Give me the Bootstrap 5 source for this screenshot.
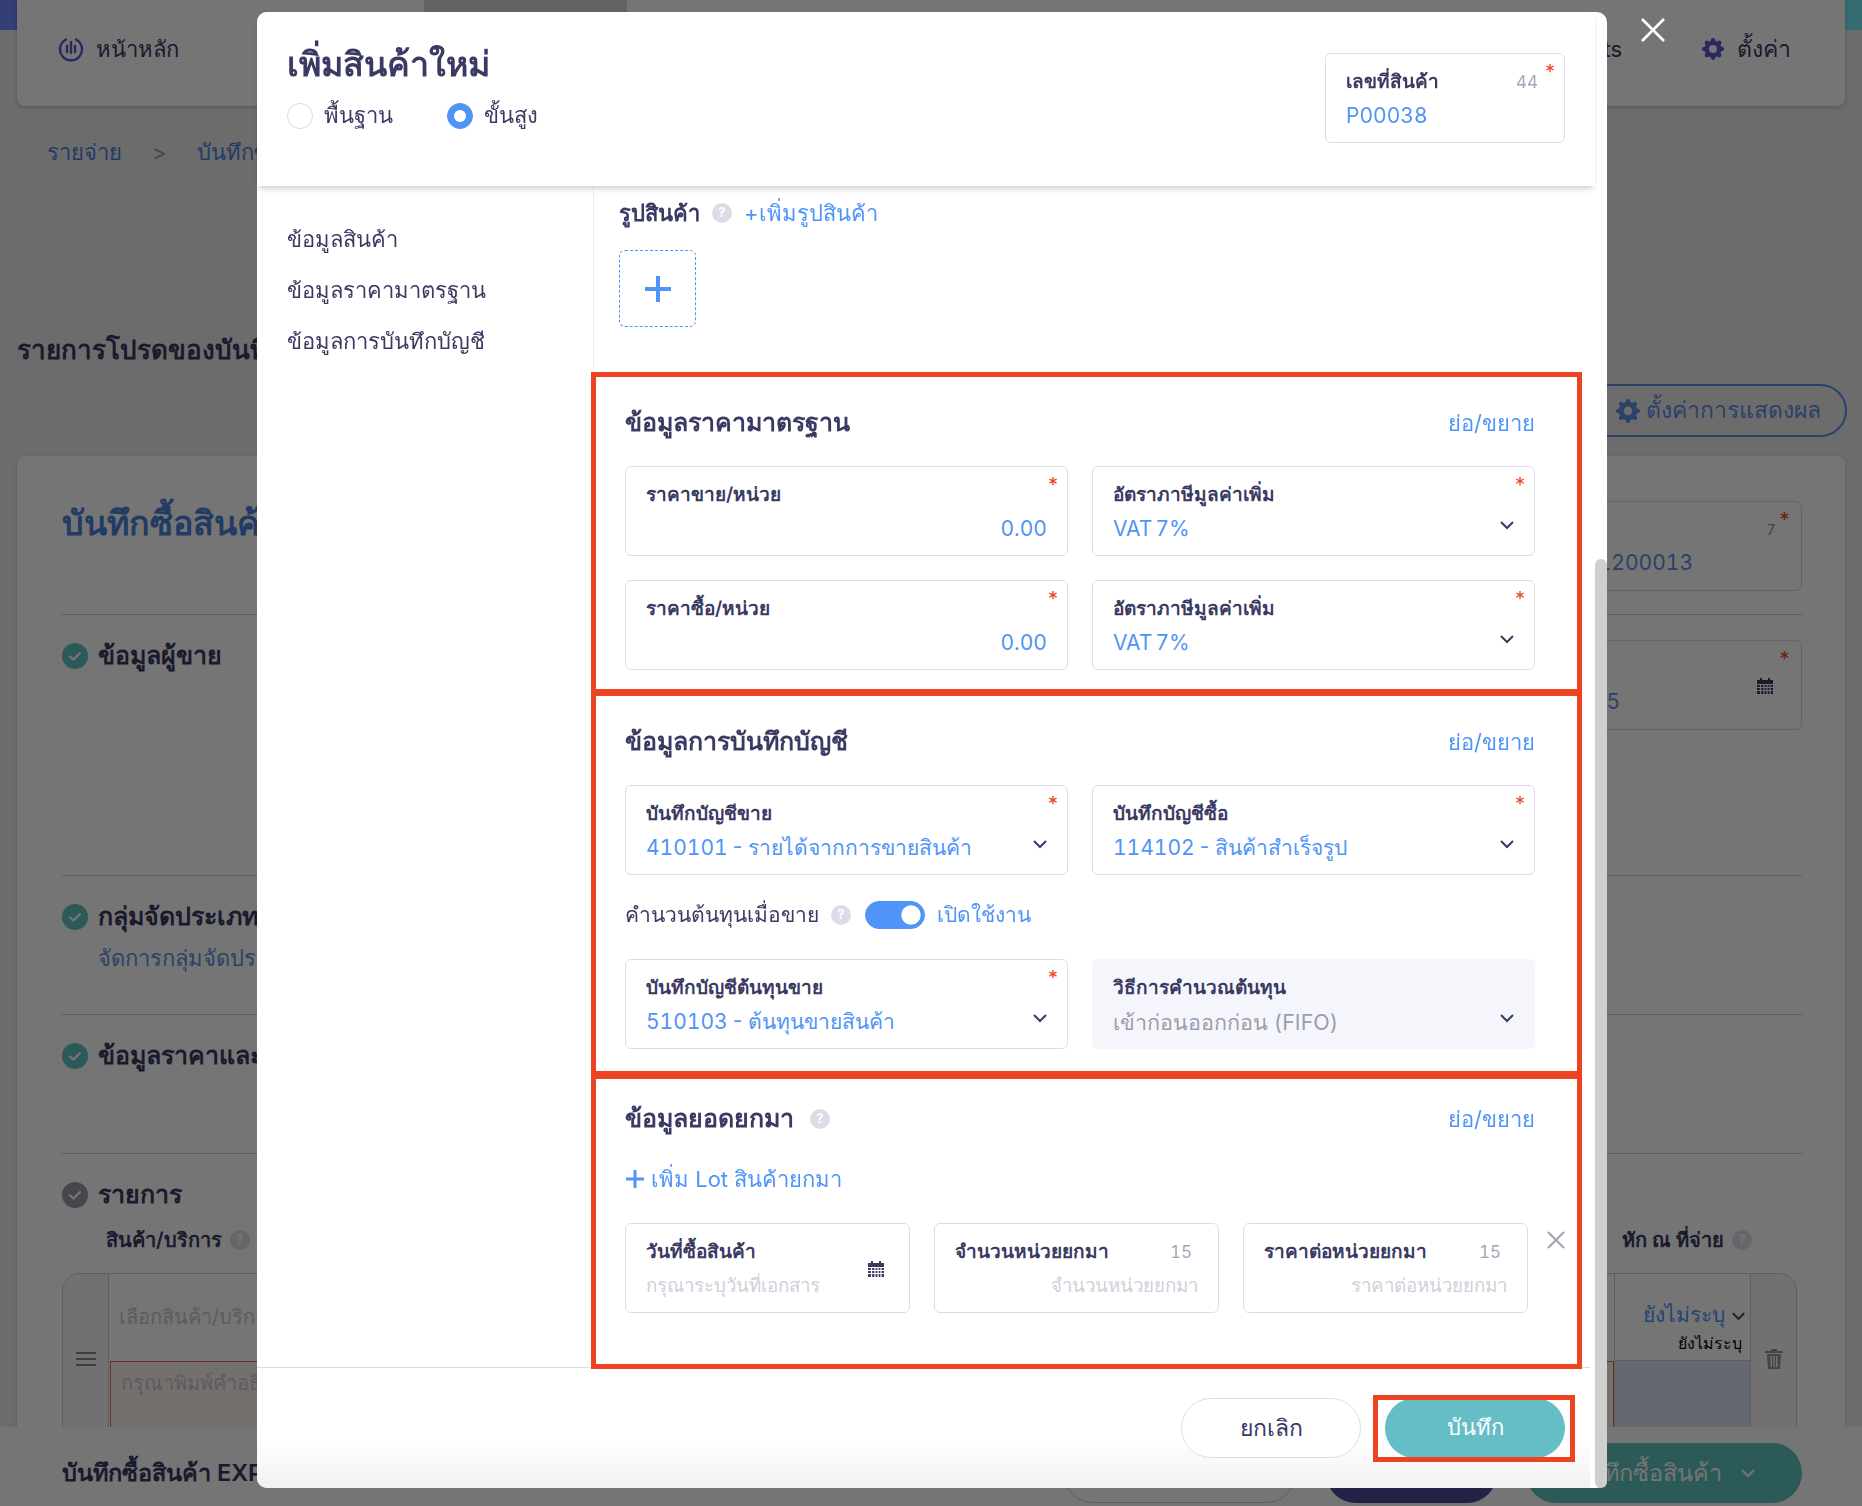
<!DOCTYPE html>
<html lang="th">
<head>
    <meta charset="UTF-8">
    <title>เพิ่มสินค้าใหม่</title>
    <link href="https://cdn.jsdelivr.net/npm/bootstrap@5.3.3/dist/css/bootstrap.min.css" rel="stylesheet">
    <script src="https://cdn.jsdelivr.net/npm/bootstrap@5.3.3/dist/js/bootstrap.bundle.min.js"></script>
    <style>
        html, body { height: 100%; overflow: hidden; }
        body { font-family: Inter, "Noto Sans", sans-serif; background: #ebebee; color: #3a3a63; font-size: 21px; }
        .txt-blue { color: #4f94f7; }
        .txt-navy { color: #3a3a63; }
        /* page behind the modal */
        .pg-top { background: linear-gradient(90deg, #7189ff, #71ecf7) top / 100% 30px no-repeat; padding: 0 17px; }
        .pg-nav { height: 106px; background: #fff; border-radius: 0 0 8px 8px; box-shadow: 0 1px 4px rgba(0,0,0,.2); font-size: 22px; }
        .pg-home { width: 407px; padding-left: 41px; padding-bottom: 8px; gap: 12px; }
        .pg-tab { width: 203px; background: #d8d8d8; align-self: stretch; }
        .pg-navright { padding-bottom: 8px; }
        .pg-navgear { margin: 0 13px 0 80px; color: #5b5bd0; }
        .pg-navset { margin-right: 54px; font-size: 23px; }
        .pg-crumb { padding: 30px 0 0 47px; height: 82px; color: #4a80d8; gap: 30px; font-size: 22px; }
        .pg-crumb-sep { color: #999; }
        .pg-head { padding: 0 15px 0 17px; height: 268px; }
        .pg-fav { font-size: 26px; font-weight: 600; padding-top: 142px; }
        .pg-setbtn { width: 292px; height: 53px; margin-top: 196px; padding-right: 24px; gap: 6px; border: 2px solid #5f8fe0; border-radius: 27px; color: #5f8fe0; background: transparent; font-size: 23px; }
        .pg-card { margin: 0 17px; background: #fff; border-radius: 8px; padding: 0 43px 0 45px; height: 1100px; box-shadow: 0 1px 4px rgba(0,0,0,.12); }
        .pg-title-row { height: 158px; }
        .pg-title { font-size: 34px; font-weight: 600; color: #4a80d8; margin: 47px 0 0; }
        .pg-sec { border-top: 1px solid #ccc; height: 261px; padding-top: 22px; }
        .pg-sec-sm { height: 139px; }
        .pg-sec-h { font-size: 25px; font-weight: 600; gap: 10px; }
        .pg-check { width: 26px; height: 26px; border-radius: 50%; background: #5ec4bf; flex: none; }
        .pg-check-g { background: #9a9aa6; }
        .pg-link { color: #5f8fe0; font-size: 22px; margin: 6px 0 0 36px; }
        .pg-fld { width: 400px; height: 90px; border: 1px solid #d8d8e2; border-radius: 6px; position: relative; padding: 45px 0 0; color: #5f8fe0; text-align: right; font-feature-settings: "tnum"; }
        .pg-fld-a { margin-top: 45px; padding-right: 108px; }
        .pg-fld-b { margin-top: 3px; padding-right: 181px; }
        .pg-fld-max { position: absolute; top: 17px; right: 25px; font-size: 15px; color: #999; }
        .pg-fld-star { position: absolute; top: 8px; right: 10px; color: #ee4323; font-size: 20px; line-height: 20px; }
        .pg-fld-cal { position: absolute; top: 36px; right: 27px; line-height: 0; }
        .pg-tbl-h { font-size: 20px; font-weight: 600; height: 59px; padding: 11px 50px 0 44px; }
        .pg-tbl { height: 300px; margin-right: 5px; border: 1px solid #ccc; border-radius: 18px 18px 0 0; }
        .pg-tbl-side { width: 46px; background: #f6f6f6; border-right: 1px solid #ccc; border-radius: 18px 0 0 0; padding-top: 77px; line-height: 0; text-align: center; }
        .pg-tbl-main { flex: 1; }
        .pg-ph { color: #c8c8d2; font-size: 20px; padding: 28px 10px 0; height: 87px; }
        .pg-redbox { margin-left: 1px; border: 1px solid #e26a4f; background: #fdf3ef; height: 200px; color: #c8c8d2; font-size: 20px; padding: 6px 10px; }
        .pg-tbl-vat { width: 136px; border-left: 1px solid #ccc; text-align: right; }
        .pg-tbl-vat-top { height: 87px; border-bottom: 1px solid #ccc; padding: 26px 4px 0 0; font-size: 21px; line-height: 30px; }
        .pg-tbl-vat-top small { display: block; font-size: 16px; color: #000; line-height: 20px; padding: 3px 4px 0 0; }
        .pg-tbl-vat-low { height: 200px; background: #dbe4f3; }
        .pg-tbl-tr { width: 46px; background: #f6f6f6; border-left: 1px solid #ccc; border-radius: 0 18px 0 0; padding-top: 75px; text-align: center; line-height: 0; }
        .pg-bottom { position: absolute; left: 0; right: 0; bottom: 0; height: 79px; background: #fff; padding: 14px 60px 1px 62px; font-size: 23.5px; font-weight: 600; }
        .pg-btn { height: 60px; border-radius: 30px; }
        .pg-btn-o { width: 233px; border: 1px solid #ccc; margin-left: auto; }
        .pg-btn-n { width: 171px; background: #4a4a9c; margin-left: 30px; }
        .pg-btn-t { width: 276px; background: #5ec4bf; margin-left: 29px; color: #fff; font-weight: 400; gap: 18px; }
        /* modal */
        .modal-backdrop { --bs-backdrop-opacity: .54; }
        .prod-dialog { max-width: none; width: 1350px; margin: 12px 0 0 257px; }
        .prod-content { height: 1476px; border: 0; border-radius: 10px; }
        .prod-close { position: absolute; left: 1383px; top: 5px; background: none; border: 0; padding: 0; line-height: 0; }
        .modal-header.prod-header { height: 174px; margin-right: 12px; padding: 0 30px; border: 0; border-radius: 10px 0 0 0; box-shadow: 0 4px 6px -2px rgba(0,0,0,.22); align-items: flex-start; position: relative; z-index: 2; background: #fff; }
        .prod-title { font-size: 34px; font-weight: 600; margin: 29px 0 0; line-height: 46px; }
        .prod-radio { gap: 54px; margin-top: 12px; }
        .prod-radio .form-check { padding: 0; margin: 0; display: flex; align-items: center; gap: 11px; }
        .prod-radio .form-check-input { float: none; width: 26px; height: 26px; margin: 0; border-color: #dcdce8; }
        .prod-radio .form-check-input:checked { background-color: #4f94f7; border-color: #4f94f7; }
        .prod-radio .form-check-label { font-size: 22px; }
        .prod-code { width: 240px; height: 90px; margin-top: 41px; }
        .modal-body.prod-body { padding: 0; display: flex; position: relative; z-index: 1; min-height: 0; }
        .prod-side { width: 337px; flex: none; padding: 30px 0 0 30px; border-right: 1px solid #eeeef4; height: 186px; font-size: 22px; font-weight: 300; }
        .prod-side div { height: 51px; line-height: 46px; }
        .prod-pane { flex: 1; margin: 0 25px 0 -3px; min-width: 0; }
        .prod-pic { padding: 8px 0 0 28px; height: 186px; }
        .prod-pic-h { font-size: 22px; gap: 12px; height: 38px; }
        .prod-pic-h b { font-weight: 600; }
        .prod-add { width: 77px; height: 77px; border: 1px dashed #4f94f7; border-radius: 6px; margin-top: 18px; }
        .prod-q { display: inline-flex; align-items: center; justify-content: center; width: 20px; height: 20px; border-radius: 50%; background: #dcdce8; color: #fff; font-size: 13px; font-weight: 700; flex: none; }
        .prod-frame { border: 5px solid #ee4323; padding: 0 42px 0 29px; }
        .prod-frame-a { height: 322px; }
        .prod-frame-b { height: 385px; margin-top: -3px; }
        .prod-frame-c { height: 295px; margin-top: -2px; }
        .prod-sec-h { height: 89px; padding-top: 3px; }
        .prod-frame-c .prod-sec-h { height: 80px; padding-top: 0; }
        .prod-sec-t { font-size: 25px; font-weight: 600; }
        .prod-fold { font-size: 22px; color: #4f94f7; }
        .prod-fld { position: relative; height: 90px; border: 1px solid #dcdce8; border-radius: 6px; padding: 14px 20px 0; background: #fff; }
        .prod-fld-off { background: #f5f6fb; border-color: #f5f6fb; }
        .prod-lbl { font-size: 19px; font-weight: 600; line-height: 28px; }
        .prod-max { font-size: 17px; color: #a6a6b8; font-weight: 400; padding-right: 2px; font-feature-settings: "tnum"; }
        .prod-val { font-size: 21px; color: #4f94f7; line-height: 32px; margin-top: 4px; font-feature-settings: "tnum"; word-spacing: -2.5px; }
        .prod-val-off { color: #9c9cae; font-size: 21.5px; word-spacing: 0; }
        .prod-val-ph { font-size: 18.7px; color: #cfcfda; font-weight: 300; word-spacing: 0; }
        .prod-star { position: absolute; top: 8px; right: 9px; color: #ee4323; font-size: 20px; line-height: 20px; }
        .prod-chev { position: absolute; right: 19px; top: 53px; line-height: 0; }
        .prod-cal { position: absolute; right: 24px; top: 36px; line-height: 0; }
        .prod-toggle { height: 84px; padding-bottom: 4px; gap: 12px; }
        .prod-toggle .form-switch { padding: 0; margin: 0 0 0 2px; min-height: 0; display: flex; }
        .prod-toggle .form-check-input { float: none; width: 60px; height: 28px; margin: 0; background-color: #4f94f7; border-color: #4f94f7; }
        .prod-lot { height: 40px; font-size: 22px; gap: 6px; }
        .prod-lot-row { gap: 24px; margin-top: 24px; }
        .prod-lot-row .prod-fld { flex: 1; }
        .prod-x { line-height: 0; margin: 7px -31px 0 -6px; }
        .prod-thumb { position: absolute; right: 0; top: 547px; width: 12px; height: 929px; background: #cfcfcf; border-radius: 6px; z-index: 3; }
        .modal-footer.prod-footer { height: 121px; padding: 0 24px 0 0; margin-right: 17px; border-top: 1px solid #dcdce8; background: linear-gradient(#fff 60%, #f1f1f1); border-radius: 0 0 0 10px; flex-wrap: nowrap; gap: 12px; }
        .prod-cancel { width: 180px; height: 60px; border: 1px solid #dcdce8; border-radius: 30px; background: #fff; color: #3a3a63; font-size: 23px; margin: 0; }
        .prod-save-box { border: 5px solid #ee4323; width: 202px; height: 67px; overflow: hidden; margin: 0 -9px 0 0; flex: none; padding: 0 0 0 7px; }
        .prod-save { width: 180px; height: 60px; margin-top: -2px; border-radius: 30px; border: 0; background: #65bec6; color: #fff; font-size: 22px; }
    </style>
</head>
<body>
    <svg width="0" height="0" class="position-absolute">
        <symbol id="icoGear" viewBox="0 0 16 16"><path fill="currentColor" d="M9.405 1.05c-.413-1.4-2.397-1.4-2.81 0l-.1.34a1.464 1.464 0 0 1-2.105.872l-.31-.17c-1.283-.698-2.686.705-1.987 1.987l.169.311c.446.82.023 1.841-.872 2.105l-.34.1c-1.4.413-1.4 2.397 0 2.81l.34.1a1.464 1.464 0 0 1 .872 2.105l-.17.31c-.698 1.283.705 2.686 1.987 1.987l.311-.169a1.464 1.464 0 0 1 2.105.872l.1.34c.413 1.4 2.397 1.4 2.81 0l.1-.34a1.464 1.464 0 0 1 2.105-.872l.31.17c1.283.698 2.686-.705 1.987-1.987l-.169-.311a1.464 1.464 0 0 1 .872-2.105l.34-.1c1.4-.413 1.4-2.397 0-2.81l-.34-.1a1.464 1.464 0 0 1-.872-2.105l.17-.31c.698-1.283-.705-2.686-1.987-1.987l-.311.169a1.464 1.464 0 0 1-2.105-.872l-.1-.34zM8 10.93a2.929 2.929 0 1 1 0-5.86 2.929 2.929 0 0 1 0 5.858z"/></symbol>
        <symbol id="icoChev" viewBox="0 0 16 10"><path d="M2 2l6 6 6-6" fill="none" stroke="currentColor" stroke-width="2"/></symbol>
        <symbol id="icoCal" viewBox="0 0 18 18"><path fill="#3a3a63" d="M1 3h16v4H1zM4 1h2v3H4zM12 1h2v3h-2z"/><path fill="#3a3a63" d="M1 8h16v9H1z"/><path stroke="#fff" stroke-width="1.2" d="M1 10.5h16M1 13.5h16M4.500 8v9M8 8v9M11 8v9M14 8v9"/></symbol>
        <symbol id="icoCheck" viewBox="0 0 26 26"><path d="M8 13.500l3.500 3 6.500-6.500" fill="none" stroke="#fff" stroke-width="2.200" stroke-linecap="round" stroke-linejoin="round"/></symbol>
    </svg>

    <!-- page behind the modal -->
    <div class="pg-top">
        <div class="pg-nav d-flex align-items-center">
            <div class="pg-home d-flex align-items-center">
                <svg width="26" height="26" viewBox="0 0 26 26" fill="none" stroke="#5b5bd0" stroke-width="2.4" stroke-linecap="round"><path d="M8 3.500a11 11 0 1 0 10 0"/><path d="M9 10v6M13 6v11M17 10v6"/></svg>
                <span>หน้าหลัก</span>
            </div>
            <div class="pg-tab"></div>
            <div class="ms-auto pg-navright">Contacts</div>
            <div class="d-flex align-items-center pg-navright pg-navset">
                <svg width="22" height="26" class="pg-navgear"><use href="#icoGear"/></svg>
                <span>ตั้งค่า</span>
            </div>
        </div>
    </div>
    <div class="pg-crumb d-flex"><span>รายจ่าย</span><span class="pg-crumb-sep">&gt;</span><span>บันทึกซื้อสินค้า</span></div>
    <div class="pg-head d-flex justify-content-between align-items-start">
        <div class="pg-fav">รายการโปรดของบันทึกซื้อสินค้า</div>
        <button class="pg-setbtn btn d-flex align-items-center justify-content-end ps-0">
            <svg width="24" height="24"><use href="#icoGear"/></svg>ตั้งค่าการแสดงผล
        </button>
    </div>
    <div class="pg-card">
        <div class="pg-title-row d-flex justify-content-between align-items-start">
            <h2 class="pg-title">บันทึกซื้อสินค้า</h2>
            <div class="pg-fld pg-fld-a">EXP201200013<span class="pg-fld-max">7</span><span class="pg-fld-star">*</span></div>
        </div>
        <div class="pg-sec d-flex justify-content-between align-items-start">
            <div class="pg-sec-h d-flex align-items-center"><svg class="pg-check"><use href="#icoCheck"/></svg>ข้อมูลผู้ขาย</div>
            <div class="pg-fld pg-fld-b">25/01/2565<span class="pg-fld-cal"><svg width="18" height="18"><use href="#icoCal"/></svg></span><span class="pg-fld-star">*</span></div>
        </div>
        <div class="pg-sec pg-sec-sm">
            <div class="pg-sec-h d-flex align-items-center"><svg class="pg-check"><use href="#icoCheck"/></svg>กลุ่มจัดประเภท</div>
            <div class="pg-link">จัดการกลุ่มจัดประเภท</div>
        </div>
        <div class="pg-sec pg-sec-sm">
            <div class="pg-sec-h d-flex align-items-center"><svg class="pg-check"><use href="#icoCheck"/></svg>ข้อมูลราคาและภาษี</div>
        </div>
        <div class="pg-sec pg-sec-sm">
            <div class="pg-sec-h d-flex align-items-center"><svg class="pg-check pg-check-g"><use href="#icoCheck"/></svg>รายการ</div>
            <div class="pg-tbl-h d-flex justify-content-between">
                <span class="d-flex align-items-center gap-2 align-self-start">สินค้า/บริการ <span class="prod-q">?</span></span>
                <span class="d-flex align-items-center gap-2 align-self-start">หัก ณ ที่จ่าย <span class="prod-q">?</span></span>
            </div>
            <div class="pg-tbl d-flex">
                <div class="pg-tbl-side">
                    <svg width="20" height="16" viewBox="0 0 20 16" stroke="#888" stroke-width="2"><path d="M0 2h20M0 8h20M0 14h20"/></svg>
                </div>
                <div class="pg-tbl-main">
                    <div class="pg-ph">เลือกสินค้า/บริการ</div>
                    <div class="pg-redbox">กรุณาพิมพ์คำอธิบาย</div>
                </div>
                <div class="pg-tbl-vat">
                    <div class="pg-tbl-vat-top txt-blue">ยังไม่ระบุ <svg width="15" height="10" class="txt-navy"><use href="#icoChev"/></svg><small>ยังไม่ระบุ</small></div>
                    <div class="pg-tbl-vat-low"></div>
                </div>
                <div class="pg-tbl-tr">
                    <svg width="18" height="20" viewBox="0 0 18 20" fill="#999"><path d="M0 2h18v2H0zM6 0h6v2H6zM2 5h14l-1 15H3zM5.500 7v11h1.500V7zM8.300 7v11h1.500V7zM11 7v11h1.500V7z" fill-rule="evenodd"/></svg>
                </div>
            </div>
        </div>
    </div>
    <div class="pg-bottom d-flex align-items-center">
        <span>บันทึกซื้อสินค้า EXP201200013</span>
        <div class="pg-btn pg-btn-o"></div>
        <div class="pg-btn pg-btn-n"></div>
        <div class="pg-btn pg-btn-t d-flex align-items-center justify-content-center">บันทึกซื้อสินค้า <svg width="16" height="10"><use href="#icoChev"/></svg></div>
    </div>

    <div class="modal-backdrop show"></div>

    <!-- add product modal -->
    <div class="modal d-block">
        <div class="modal-dialog prod-dialog position-relative">
            <button class="prod-close" type="button">
                <svg width="26" height="26" viewBox="0 0 26 26" stroke="#fff" stroke-width="2.6"><path d="M2 2l22 22M24 2L2 24"/></svg>
            </button>
            <div class="modal-content prod-content position-relative">
                <div class="prod-thumb"></div>
                <div class="modal-header prod-header justify-content-between">
                    <div>
                        <h1 class="prod-title">เพิ่มสินค้าใหม่</h1>
                        <div class="prod-radio d-flex">
                            <div class="form-check">
                                <input class="form-check-input" type="radio" name="mode" id="modeBasic">
                                <label class="form-check-label" for="modeBasic">พื้นฐาน</label>
                            </div>
                            <div class="form-check">
                                <input class="form-check-input" type="radio" name="mode" id="modeAdv" checked>
                                <label class="form-check-label" for="modeAdv">ขั้นสูง</label>
                            </div>
                        </div>
                    </div>
                    <div class="prod-fld prod-code">
                        <div class="prod-lbl d-flex justify-content-between pe-1">เลขที่สินค้า <span class="prod-max">44</span></div>
                        <div class="prod-val">P00038</div>
                        <span class="prod-star">*</span>
                    </div>
                </div>

                <div class="modal-body prod-body">
                    <div class="prod-side">
                        <div>ข้อมูลสินค้า</div>
                        <div>ข้อมูลราคามาตรฐาน</div>
                        <div>ข้อมูลการบันทึกบัญชี</div>
                    </div>
                    <div class="prod-pane">
                        <div class="prod-pic">
                            <div class="prod-pic-h d-flex align-items-center"><b>รูปสินค้า</b><span class="prod-q">?</span><span class="txt-blue">+เพิ่มรูปสินค้า</span></div>
                            <div class="prod-add d-flex align-items-center justify-content-center">
                                <svg width="30" height="30" viewBox="0 0 30 30" stroke="#4f94f7" stroke-width="4"><path d="M15 2v26M2 15h26"/></svg>
                            </div>
                        </div>

                        <section class="prod-frame prod-frame-a">
                            <div class="prod-sec-h d-flex justify-content-between align-items-center">
                                <span class="prod-sec-t">ข้อมูลราคามาตรฐาน</span><span class="prod-fold">ย่อ/ขยาย</span>
                            </div>
                            <div class="row g-4">
                                <div class="col-6"><div class="prod-fld"><div class="prod-lbl">ราคาขาย/หน่วย</div><div class="prod-val text-end">0.00</div><span class="prod-star">*</span></div></div>
                                <div class="col-6"><div class="prod-fld"><div class="prod-lbl">อัตราภาษีมูลค่าเพิ่ม</div><div class="prod-val">VAT 7%</div><span class="prod-star">*</span><span class="prod-chev"><svg width="16" height="10" class="txt-navy"><use href="#icoChev"/></svg></span></div></div>
                                <div class="col-6"><div class="prod-fld"><div class="prod-lbl">ราคาซื้อ/หน่วย</div><div class="prod-val text-end">0.00</div><span class="prod-star">*</span></div></div>
                                <div class="col-6"><div class="prod-fld"><div class="prod-lbl">อัตราภาษีมูลค่าเพิ่ม</div><div class="prod-val">VAT 7%</div><span class="prod-star">*</span><span class="prod-chev"><svg width="16" height="10" class="txt-navy"><use href="#icoChev"/></svg></span></div></div>
                            </div>
                        </section>

                        <section class="prod-frame prod-frame-b">
                            <div class="prod-sec-h d-flex justify-content-between align-items-center">
                                <span class="prod-sec-t">ข้อมูลการบันทึกบัญชี</span><span class="prod-fold">ย่อ/ขยาย</span>
                            </div>
                            <div class="row g-4">
                                <div class="col-6"><div class="prod-fld"><div class="prod-lbl">บันทึกบัญชีขาย</div><div class="prod-val">410101 - รายได้จากการขายสินค้า</div><span class="prod-star">*</span><span class="prod-chev"><svg width="16" height="10" class="txt-navy"><use href="#icoChev"/></svg></span></div></div>
                                <div class="col-6"><div class="prod-fld"><div class="prod-lbl">บันทึกบัญชีซื้อ</div><div class="prod-val">114102 - สินค้าสำเร็จรูป</div><span class="prod-star">*</span><span class="prod-chev"><svg width="16" height="10" class="txt-navy"><use href="#icoChev"/></svg></span></div></div>
                            </div>
                            <div class="prod-toggle d-flex align-items-center">
                                <span>คำนวนต้นทุนเมื่อขาย</span><span class="prod-q">?</span>
                                <div class="form-check form-switch"><input class="form-check-input" type="checkbox" role="switch" checked></div>
                                <span class="txt-blue">เปิดใช้งาน</span>
                            </div>
                            <div class="row g-4">
                                <div class="col-6"><div class="prod-fld"><div class="prod-lbl">บันทึกบัญชีต้นทุนขาย</div><div class="prod-val">510103 - ต้นทุนขายสินค้า</div><span class="prod-star">*</span><span class="prod-chev"><svg width="16" height="10" class="txt-navy"><use href="#icoChev"/></svg></span></div></div>
                                <div class="col-6"><div class="prod-fld prod-fld-off"><div class="prod-lbl">วิธีการคำนวณต้นทุน</div><div class="prod-val prod-val-off">เข้าก่อนออกก่อน (FIFO)</div><span class="prod-chev"><svg width="16" height="10" class="txt-navy"><use href="#icoChev"/></svg></span></div></div>
                            </div>
                        </section>

                        <section class="prod-frame prod-frame-c">
                            <div class="prod-sec-h d-flex justify-content-between align-items-center">
                                <span class="prod-sec-t d-flex align-items-center gap-3">ข้อมูลยอดยกมา <span class="prod-q">?</span></span><span class="prod-fold">ย่อ/ขยาย</span>
                            </div>
                            <div class="prod-lot d-flex align-items-center txt-blue">
                                <svg width="20" height="20" viewBox="0 0 20 20" stroke="#4f94f7" stroke-width="3"><path d="M10 1v18M1 10h18"/></svg>
                                <span>เพิ่ม Lot สินค้ายกมา</span>
                            </div>
                            <div class="prod-lot-row d-flex align-items-start">
                                <div class="prod-fld"><div class="prod-lbl">วันที่ซื้อสินค้า</div><div class="prod-val prod-val-ph">กรุณาระบุวันที่เอกสาร</div><span class="prod-cal"><svg width="18" height="18"><use href="#icoCal"/></svg></span></div>
                                <div class="prod-fld"><div class="prod-lbl d-flex justify-content-between pe-1">จำนวนหน่วยยกมา <span class="prod-max">15</span></div><div class="prod-val prod-val-ph text-end">จำนวนหน่วยยกมา</div></div>
                                <div class="prod-fld"><div class="prod-lbl d-flex justify-content-between pe-1">ราคาต่อหน่วยยกมา <span class="prod-max">15</span></div><div class="prod-val prod-val-ph text-end">ราคาต่อหน่วยยกมา</div></div>
                                <div class="prod-x"><svg width="20" height="20" viewBox="0 0 20 20" stroke="#a6a6b8" stroke-width="2.2"><path d="M2 2l16 16M18 2L2 18"/></svg></div>
                            </div>
                        </section>
                    </div>
                </div>

                <div class="modal-footer prod-footer">
                    <button class="prod-cancel btn" type="button">ยกเลิก</button>
                    <div class="prod-save-box">
                        <button class="prod-save btn" type="button">บันทึก</button>
                    </div>
                </div>
            </div>
        </div>
    </div>
</body>
</html>
